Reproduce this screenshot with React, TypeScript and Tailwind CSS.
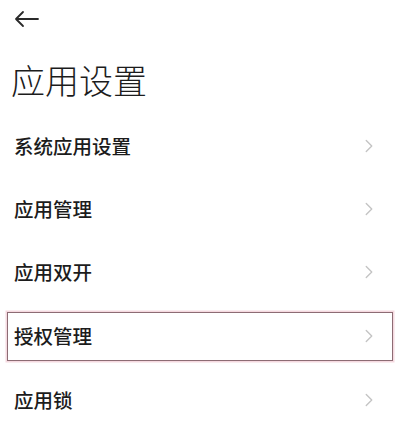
import { ChevronRight } from 'lucide-react';

// App settings list (MIUI style), one row outlined as highlighted.

const font = 'font-["Noto_Sans_CJK_SC","Noto_Sans",sans-serif]';

function Row({ label, boxed = false, h = 'h-[64px]' }: { label: string; boxed?: boolean; h?: string }) {
  const inner = (
    <div className="flex w-full items-center justify-between">
      <span className="text-[19.5px] font-medium leading-none text-[#1c1c1c]">{label}</span>
      <ChevronRight className="h-[22px] w-[22px] text-[#c4c4c4]" strokeWidth={1.5} />
    </div>
  );
  if (boxed) {
    return (
      <div className={`${h} flex items-center px-[7px]`}>
        <div className="flex h-[49px] w-full items-center border border-[#8d6c74] pl-[6px] pr-[12px] shadow-[0_0_0_1.5px_rgba(236,186,198,0.55)]">
          {inner}
        </div>
      </div>
    );
  }
  return <div className={`${h} flex items-center pl-[14px] pr-[20px]`}>{inner}</div>;
}

export default function App() {
  return (
    <div className={`${font} h-[424px] w-[400px] overflow-hidden bg-white`}>
      <div className="pl-[14px] pt-[10px]">
        <svg width="26" height="18" viewBox="0 0 26 18" fill="none" stroke="#2a2a2a" strokeWidth={1.8} strokeLinecap="round" strokeLinejoin="round">
          <path d="M2 9h22M9 2 2 9l7 7" />
        </svg>
      </div>
      <h1 className="mt-[32px] pl-[11px] text-[34px] font-light leading-[40px] text-[#1c1c1c]">应用设置</h1>
      <div className="mt-[14px]">
        <Row label="系统应用设置" />
        <Row label="应用管理" h="h-[62px]" />
        <Row label="应用双开" />
        <Row label="授权管理" boxed />
        <Row label="应用锁" />
      </div>
    </div>
  );
}
